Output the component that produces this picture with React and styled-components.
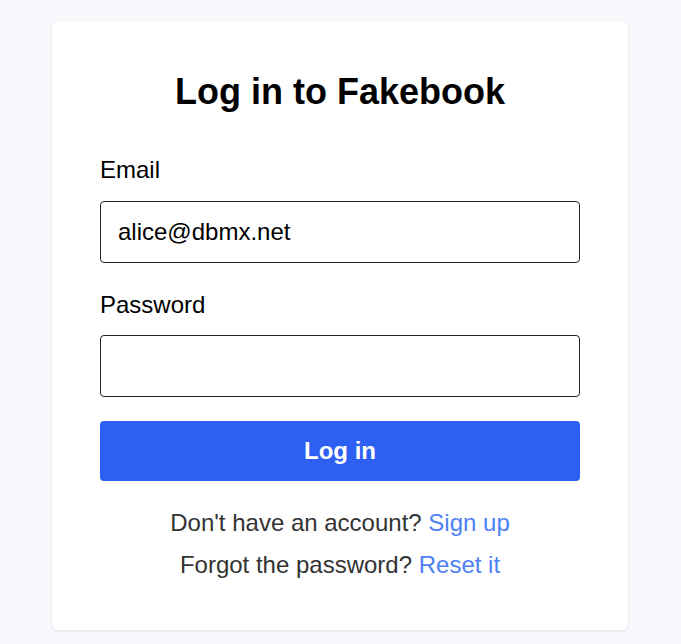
import styled, { createGlobalStyle } from "styled-components";

const GlobalStyle = createGlobalStyle`
  html, body {
    margin: 0;
    padding: 0;
    background: #f8f8fd;
    font-family: "Liberation Sans", Arial, sans-serif;
  }
`;

const Page = styled.div`
  min-height: 644px;
  padding: 21px 1px 0 0;
  box-sizing: border-box;
`;

const Card = styled.form`
  width: 576px;
  margin: 0 auto;
  box-sizing: border-box;
  padding: 50px 48px 52px;
  background: #fff;
  border-radius: 6px;
  box-shadow: 0 1px 3px rgba(0, 0, 0, 0.1);
  display: flex;
  flex-direction: column;
`;

const Title = styled.h1`
  margin: 0 0 44px;
  font-size: 36px;
  line-height: 41px;
  font-weight: 700;
  color: #000;
  text-align: center;
`;

const Field = styled.div`
  display: flex;
  flex-direction: column;
  gap: 17px;
  margin-bottom: ${({ last }) => (last ? "24px" : "28px")};
`;

const Label = styled.label`
  font-size: 24px;
  line-height: 27.6px;
  color: #000;
`;

const Input = styled.input`
  height: 62px;
  box-sizing: border-box;
  padding: 16px 17px;
  border: 1px solid #222;
  border-radius: 4px;
  font-family: inherit;
  font-size: 24px;
  color: #000;
  background: #fff;
  outline: none;
`;

const Button = styled.button`
  height: 60px;
  border: none;
  border-radius: 4px;
  background: #2e5ff3;
  color: #fff;
  font-family: inherit;
  font-size: 24px;
  font-weight: 700;
  cursor: pointer;
  margin-bottom: 28px;
`;

const Links = styled.div`
  display: flex;
  flex-direction: column;
  align-items: center;
  gap: 14px;
`;

const Line = styled.p`
  margin: 0;
  font-size: 24px;
  line-height: 27.6px;
  color: #333;
`;

const Link = styled.a`
  color: #4e80f6;
  text-decoration: none;
`;

export default function App() {
  return (
    <Page>
      <GlobalStyle />
      <Card onSubmit={(e) => e.preventDefault()}>
        <Title>Log in to Fakebook</Title>
        <Field>
          <Label htmlFor="email">Email</Label>
          <Input id="email" type="email" defaultValue="alice@dbmx.net" />
        </Field>
        <Field last>
          <Label htmlFor="password">Password</Label>
          <Input id="password" type="password" />
        </Field>
        <Button type="submit">Log in</Button>
        <Links>
          <Line>
            Don't have an account? <Link href="#">Sign up</Link>
          </Line>
          <Line>
            Forgot the password? <Link href="#">Reset it</Link>
          </Line>
        </Links>
      </Card>
    </Page>
  );
}
